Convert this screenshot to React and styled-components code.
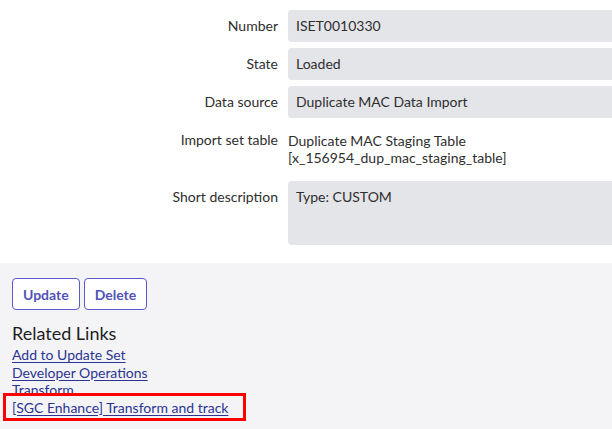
import styled, { createGlobalStyle } from 'styled-components';

const Global = createGlobalStyle`
  body {
    margin: 0;
    background: #ffffff;
    font-family: Lato, "Open Sans", sans-serif;
    font-size: 14px;
    color: #2e2e2e;
  }
`;

const fields = [
    { label: 'Number', value: 'ISET0010330', kind: 'input' },
    { label: 'State', value: 'Loaded', kind: 'input' },
    { label: 'Data source', value: 'Duplicate MAC Data Import', kind: 'input' },
    { label: 'Import set table', value: ['Duplicate MAC Staging Table', '[x_156954_dup_mac_staging_table]'], kind: 'text' },
    { label: 'Short description', value: 'Type: CUSTOM', kind: 'area' },
];

const links = [
    { text: 'Add to Update Set', link: true },
    { text: 'Developer Operations', link: true },
    { text: 'Transform', link: false },
    { text: '[SGC Enhance] Transform and track', link: true, marked: true },
];

function App() {
    return (
        <Page>
            <Global />
            <Form>
                {fields.map((f) => (
                    <Row key={f.label}>
                        <Label>{f.label}</Label>
                        {f.kind === 'text' ? (
                            <ReadText>
                                {f.value.map((line) => (
                                    <div key={line}>{line}</div>
                                ))}
                            </ReadText>
                        ) : (
                            <Field tall={f.kind === 'area'}>{f.value}</Field>
                        )}
                    </Row>
                ))}
            </Form>

            <Footer>
                <Buttons>
                    <Button>Update</Button>
                    <Button>Delete</Button>
                </Buttons>
                <Heading>Related Links</Heading>
                <LinkList>
                    {links.map((l) =>
                        l.marked ? (
                            <Marked key={l.text}>
                                <LinkItem as="a" href="#">{l.text}</LinkItem>
                            </Marked>
                        ) : l.link ? (
                            <LinkItem as="a" href="#" key={l.text}>{l.text}</LinkItem>
                        ) : (
                            <Plain key={l.text}>{l.text}</Plain>
                        )
                    )}
                </LinkList>
            </Footer>
        </Page>
    );
}

export default App;

const Page = styled.div`
  width: 612px;
  height: 429px;
  overflow: hidden;
  display: flex;
  flex-direction: column;
`;

const Form = styled.div`
  display: flex;
  flex-direction: column;
  gap: 6px;
  padding: 10px 0 18px;
`;

const Row = styled.div`
  display: grid;
  grid-template-columns: 278px 1fr;
  column-gap: 10px;
  align-items: start;
`;

const Label = styled.div`
  text-align: right;
  padding-top: 7px;
  line-height: 18px;
  color: #2e2e2e;
`;

const Field = styled.div`
  background: #e4e5e9;
  border-radius: 4px 0 0 4px;
  padding: 7px 8px;
  line-height: 18px;
  height: ${(p) => (p.tall ? '64px' : '32px')};
  box-sizing: border-box;
  color: #2e2e2e;
`;

const ReadText = styled.div`
  padding: 8px 0 9px;
  line-height: 17px;
  color: #2e2e2e;
`;

const Footer = styled.div`
  flex: 1;
  background: #f4f4f7;
  padding: 15px 12px 0;
`;

const Buttons = styled.div`
  display: flex;
  gap: 4px;
`;

const Button = styled.button`
  height: 32px;
  padding: 0 10px;
  border: 1px solid #5a5acb;
  border-radius: 4px;
  background: #ffffff;
  color: #5052b8;
  font-family: Lato, "Open Sans", sans-serif;
  font-size: 14px;
  font-weight: 700;
`;

const Heading = styled.div`
  font-size: 18px;
  line-height: 22px;
  margin-top: 12px;
  color: #1e1e1e;
`;

const LinkList = styled.div`
  display: flex;
  flex-direction: column;
  margin-top: 2px;
`;

const LinkItem = styled.div`
  line-height: 17.5px;
  color: #2b3591;
  text-decoration: underline;
  text-underline-offset: 2px;
  align-self: flex-start;
`;

const Plain = styled.div`
  line-height: 17.5px;
  color: #2b3591;
`;

const Marked = styled.div`
  align-self: flex-start;
  margin: -6px 0 0 -9px;
  padding: 3px 15px 2px 6px;
  border: 3px solid #ff0000;
  display: flex;
`;
